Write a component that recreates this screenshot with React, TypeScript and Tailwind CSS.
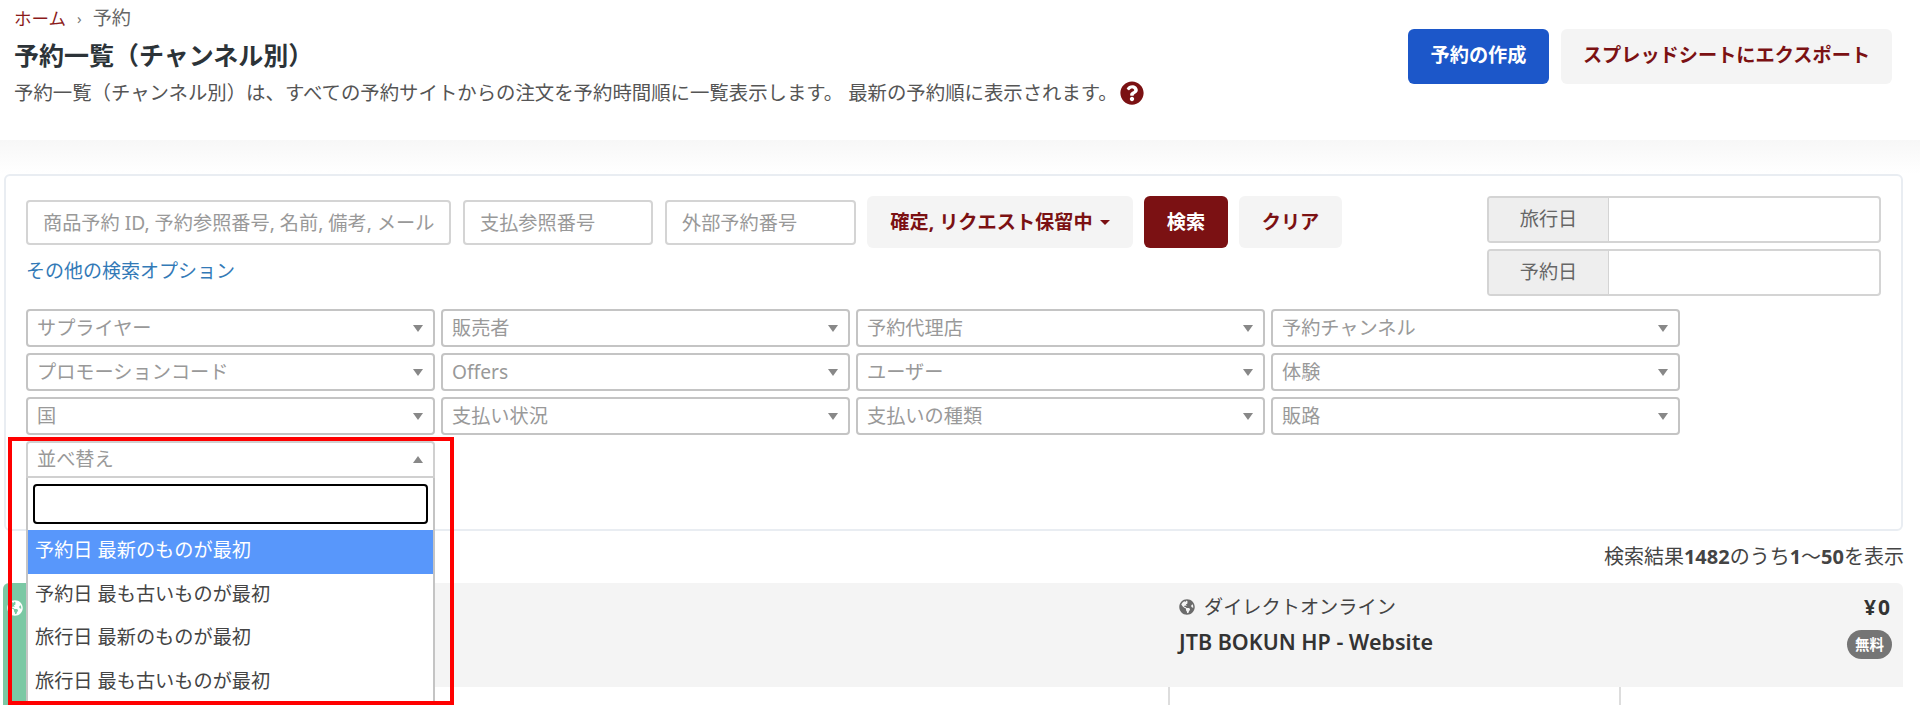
import { FaGlobeAmericas, FaQuestionCircle } from "react-icons/fa";

const filters = [
  "サプライヤー",
  "販売者",
  "予約代理店",
  "予約チャンネル",
  "プロモーションコード",
  "Offers",
  "ユーザー",
  "体験",
  "国",
  "支払い状況",
  "支払いの種類",
  "販路",
];

const sortOptions = [
  "予約日 最新のものが最初",
  "予約日 最も古いものが最初",
  "旅行日 最新のものが最初",
  "旅行日 最も古いものが最初",
];

function FilterSelect({ label }: { label: string }) {
  return (
    <div className="flex h-[38px] items-center justify-between rounded-[4px] border-2 border-[#c4c4c4] bg-white pl-[9px] pr-[10px] text-[#999]">
      <span>{label}</span>
      <span className="h-0 w-0 border-x-[5px] border-t-[7px] border-x-transparent border-t-[#888]" />
    </div>
  );
}

function DateGroup({ label }: { label: string }) {
  return (
    <div className="flex h-[47px] overflow-hidden rounded-[4px] border-2 border-[#d4d4d4] bg-white">
      <div className="flex w-[120px] items-center justify-center border-r border-[#d4d4d4] bg-[#eeeeee] text-[#666]">
        {label}
      </div>
      <input className="min-w-0 flex-1" aria-label={label} />
    </div>
  );
}

export default function App() {
  return (
    <div className="relative h-[705px] w-full overflow-hidden bg-white font-['Noto_Sans','Noto_Sans_CJK_JP',sans-serif] text-[19.2px] text-[#555]">
      <header className="flex h-[140px] justify-between pl-[14px] pr-[28px]">
        <div className="pt-[6px]">
          <div className="flex h-[24px] items-center leading-[24px]">
            <span className="text-[17.5px] text-[#8b1a1a]">ホーム</span>
            <span className="mx-[11px] text-[15px] text-[#777]">›</span>
            <span className="text-[#666]">予約</span>
          </div>
          <h1 className="mt-[7px] text-[25px] font-bold leading-[36px] text-[#2c3338]">
            予約一覧（チャンネル別）
          </h1>
          <div className="mt-[6px] flex h-[28px] items-center leading-[28px]">
            <span className="text-[19.4px]">
              予約一覧（チャンネル別）は、すべての予約サイトからの注文を予約時間順に一覧表示します。 最新の予約順に表示されます。
            </span>
            <FaQuestionCircle className="ml-[2px] size-[24px] text-[#7b1113]" />
          </div>
        </div>
        <div className="flex gap-[12px] pt-[29px]">
          <button className="h-[55px] w-[141px] rounded-[6px] bg-[#1c57c9] pb-[2px] font-bold text-white">
            予約の作成
          </button>
          <button className="h-[55px] w-[331px] rounded-[6px] bg-[#f4f4f4] pb-[2px] font-bold text-[#7b1113]">
            スプレッドシートにエクスポート
          </button>
        </div>
      </header>

      <div className="h-[34px] bg-gradient-to-b from-[#f7f7f7] to-white" />

      <section className="ml-[4px] mr-[17px] h-[357px] rounded-[6px] border-2 border-[#e9edf2] bg-white pl-[20px] pr-[20px] pt-[20px]">
        <div className="flex h-[113px] items-start">
          <div>
            <div className="flex items-center gap-[11px]">
              <div className="flex gap-[12px]">
                <input
                  placeholder="商品予約 ID, 予約参照番号, 名前, 備考, メールアドレス"
                  className="h-[45px] w-[425px] rounded-[4px] border-2 border-[#d4d4d4] px-[15px] placeholder:text-[#999]"
                />
                <input
                  placeholder="支払参照番号"
                  className="h-[45px] w-[190px] rounded-[4px] border-2 border-[#d4d4d4] pl-[15px] placeholder:text-[#999]"
                />
                <input
                  placeholder="外部予約番号"
                  className="h-[45px] w-[191px] rounded-[4px] border-2 border-[#d4d4d4] pl-[15px] placeholder:text-[#999]"
                />
              </div>
              <button className="flex h-[52px] w-[266px] items-center justify-center gap-[7px] rounded-[6px] bg-[#f4f4f4] font-bold text-[#7b1113]">
                確定, リクエスト保留中
                <span className="h-0 w-0 border-x-[5px] border-t-[5px] border-x-transparent border-t-[#7b1113]" />
              </button>
              <button className="h-[52px] w-[84px] rounded-[6px] bg-[#7b1113] font-bold text-white">
                検索
              </button>
              <button className="h-[52px] w-[103px] rounded-[6px] bg-[#f4f4f4] font-bold text-[#7b1113]">
                クリア
              </button>
            </div>
            <a className="mt-[9px] block text-[19px] leading-[28px] text-[#337ab7]">その他の検索オプション</a>
          </div>
          <div className="ml-auto flex w-[394px] flex-col gap-[6px]">
            <DateGroup label="旅行日" />
            <DateGroup label="予約日" />
          </div>
        </div>

        <div className="grid w-[1654px] grid-cols-4 gap-[6px]">
          {filters.map((label) => (
            <FilterSelect key={label} label={label} />
          ))}
          <div className="relative">
            <div className="flex h-[37px] items-center justify-between rounded-t-[4px] border-2 border-[#d0d0d0] bg-white pl-[9px] pr-[10px] text-[#999]">
              <span>並べ替え</span>
              <span className="h-0 w-0 border-x-[5px] border-b-[7px] border-x-transparent border-b-[#888]" />
            </div>
            {/* open dropdown hangs over the card edge and the result row */}
            <div className="absolute left-0 right-0 top-[37px] z-10 h-[230px] border-x-2 border-[#c4c4c4] bg-white">
              <div className="px-[5px] pt-[6px]">
                <input
                  aria-label="並べ替え"
                  className="h-[40px] w-full rounded-[4px] border-2 border-black"
                />
              </div>
              <ul className="mt-[6px]">
                {sortOptions.map((option, i) => (
                  <li
                    key={option}
                    className={
                      i === 0
                        ? "flex h-[43.5px] items-center bg-[#5897fb] pb-[2px] pl-[7px] text-white"
                        : "flex h-[43.5px] items-center pb-[2px] pl-[7px] text-[#444]"
                    }
                  >
                    {option}
                  </li>
                ))}
              </ul>
            </div>
          </div>
        </div>
      </section>

      <div className="flex h-[52px] items-center justify-end pr-[16px] text-[20px] text-[#444]">
        <span>
          検索結果<b>1482</b>のうち<b>1</b>〜<b>50</b>を表示
        </span>
      </div>

      <div className="ml-[3px] mr-[17px] flex h-[122px] rounded-t-[6px]">
        <div className="w-[24px] rounded-tl-[6px] bg-[#7bc8a4] pt-[17px]">
          <FaGlobeAmericas className="ml-[4px] size-[16px] text-white" />
        </div>
        <div className="flex min-w-0 flex-1 flex-col">
          <div className="flex h-[104px] justify-end rounded-tr-[6px] bg-[#f4f4f4] pt-[12px]">
            <div className="flex w-[724px] justify-between pr-[11px]">
              <div>
                <div className="flex h-[24px] items-center gap-[9px] text-[#444]">
                  <FaGlobeAmericas className="size-[16px] text-[#6b6b6b]" />
                  ダイレクトオンライン
                </div>
                <div className="mt-[11px] text-[21.5px] font-semibold leading-[24px] text-[#333]">
                  JTB BOKUN HP - Website
                </div>
              </div>
              <div className="flex flex-col items-end">
                <div className="text-[21px] font-bold leading-[24px] tracking-[2px] text-[#333]">¥0</div>
                <div className="mt-[11px] flex h-[29px] w-[45px] items-center justify-center rounded-full bg-[#757575] text-[14.5px] font-bold text-white">
                  無料
                </div>
              </div>
            </div>
          </div>
          <div className="flex h-[18px] justify-end">
            <div className="w-[451px] border-l-2 border-[#dddddd]" />
            <div className="w-[284px] border-l-2 border-[#dddddd]" />
          </div>
        </div>
      </div>

      {/* red annotation frame from the source screenshot */}
      <div className="pointer-events-none absolute left-[8px] top-[437px] z-20 h-[268px] w-[446px] border-4 border-[#ff0000]" />
    </div>
  );
}
